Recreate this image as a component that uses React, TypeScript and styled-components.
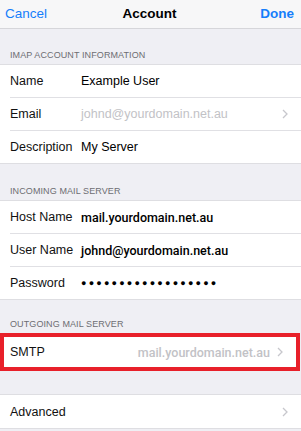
import React from "react";
import styled, { createGlobalStyle } from "styled-components";

const GlobalStyle = createGlobalStyle`
  html, body {
    margin: 0;
    padding: 0;
    background: #efeff4;
  }
  body {
    font-family: "Liberation Sans", Arial, sans-serif;
    -webkit-font-smoothing: antialiased;
  }
`;

const Screen = styled.div`
  width: 301px;
  height: 431px;
  overflow: hidden;
  background: #efeff4;
  display: flex;
  flex-direction: column;
`;

const NavBar = styled.div`
  height: 29px;
  flex-shrink: 0;
  background: #f7f7f8;
  border-bottom: 1px solid #d6d6da;
  display: grid;
  grid-template-columns: 1fr auto 1fr;
  align-items: center;
  padding: 0 7px 2px 5px;
  box-sizing: border-box;
  font-size: 13.5px;
`;

const NavButton = styled.span<{ $bold?: boolean; $right?: boolean }>`
  color: #157efb;
  font-weight: ${(p) => (p.$bold ? 700 : 400)};
  justify-self: ${(p) => (p.$right ? "end" : "start")};
`;

const Title = styled.span`
  color: #000;
  font-weight: 700;
`;

const SectionHeader = styled.div<{ $height: number }>`
  height: ${(p) => p.$height}px;
  display: flex;
  align-items: flex-end;
  padding: 0 10px 4px;
  box-sizing: border-box;
  font-size: 9px;
  letter-spacing: 0.1px;
  color: #6d6d72;
  text-transform: uppercase;
`;

const Group = styled.div<{ $highlight?: boolean }>`
  background: #fff;
  border-top: ${(p) => (p.$highlight ? "4px solid #e8202a" : "1px solid #dedee2")};
  border-bottom: ${(p) => (p.$highlight ? "4px solid #e8202a" : "1px solid #dedee2")};
  border-left: ${(p) => (p.$highlight ? "4px solid #e8202a" : "none")};
  border-right: ${(p) => (p.$highlight ? "4px solid #e8202a" : "none")};
  padding-left: ${(p) => (p.$highlight ? 6 : 10)}px;
  margin-right: ${(p) => (p.$highlight ? 1 : 0)}px;
`;

const Row = styled.div<{ $height?: number }>`
  height: ${(p) => p.$height ?? 32}px;
  display: flex;
  align-items: center;
  padding-right: 12px;
  font-size: 12.5px;
  color: #000;
  & + & {
    border-top: 1px solid #e0e0e4;
  }
`;

const Label = styled.span`
  width: 71px;
  flex-shrink: 0;
  color: #111;
`;

const Value = styled.span<{ $tone?: "muted" | "strong"; $right?: boolean }>`
  flex: 1;
  text-align: ${(p) => (p.$right ? "right" : "left")};
  color: ${(p) => (p.$tone === "muted" ? "#c2c2c6" : "#000")};
  white-space: nowrap;
  ${(p) =>
    p.$tone === "strong" || p.$right
      ? `font-family: Roboto, "Liberation Sans", sans-serif; font-weight: 500; font-size: 12.5px;`
      : ""}
`;

const Dots = styled.span`
  flex: 1;
  font-size: 9px;
  letter-spacing: 2.2px;
  color: #000;
`;

const ChevronBox = styled.span`
  width: 7px;
  margin-left: 7px;
  display: flex;
  align-items: center;
`;

const Chevron = () => (
  <ChevronBox>
    <svg width="6" height="10" viewBox="0 0 6 10">
      <path d="M1 1l4 4-4 4" fill="none" stroke="#c7c7cc" strokeWidth="1.3" />
    </svg>
  </ChevronBox>
);

export default function App() {
  return (
    <Screen>
      <GlobalStyle />
      <NavBar>
        <NavButton>Cancel</NavButton>
        <Title>Account</Title>
        <NavButton $bold $right>
          Done
        </NavButton>
      </NavBar>

      <SectionHeader $height={35}>IMAP Account Information</SectionHeader>
      <Group>
        <Row>
          <Label>Name</Label>
          <Value>Example User</Value>
        </Row>
        <Row>
          <Label>Email</Label>
          <Value $tone="muted">johnd@yourdomain.net.au</Value>
          <Chevron />
        </Row>
        <Row>
          <Label>Description</Label>
          <Value>My Server</Value>
        </Row>
      </Group>

      <SectionHeader $height={36}>Incoming Mail Server</SectionHeader>
      <Group>
        <Row>
          <Label>Host Name</Label>
          <Value $tone="strong">mail.yourdomain.net.au</Value>
        </Row>
        <Row>
          <Label>User Name</Label>
          <Value $tone="strong">johnd@yourdomain.net.au</Value>
        </Row>
        <Row>
          <Label>Password</Label>
          <Dots>●●●●●●●●●●●●●●●●●●</Dots>
        </Row>
      </Group>

      <SectionHeader $height={33}>Outgoing Mail Server</SectionHeader>
      <Group $highlight>
        <Row $height={30}>
          <Label>SMTP</Label>
          <Value $tone="muted" $right>
            mail.yourdomain.net.au
          </Value>
          <Chevron />
        </Row>
      </Group>

      <SectionHeader $height={23} />
      <Group>
        <Row $height={33}>
          <Label>Advanced</Label>
          <Value />
          <Chevron />
        </Row>
      </Group>
    </Screen>
  );
}
